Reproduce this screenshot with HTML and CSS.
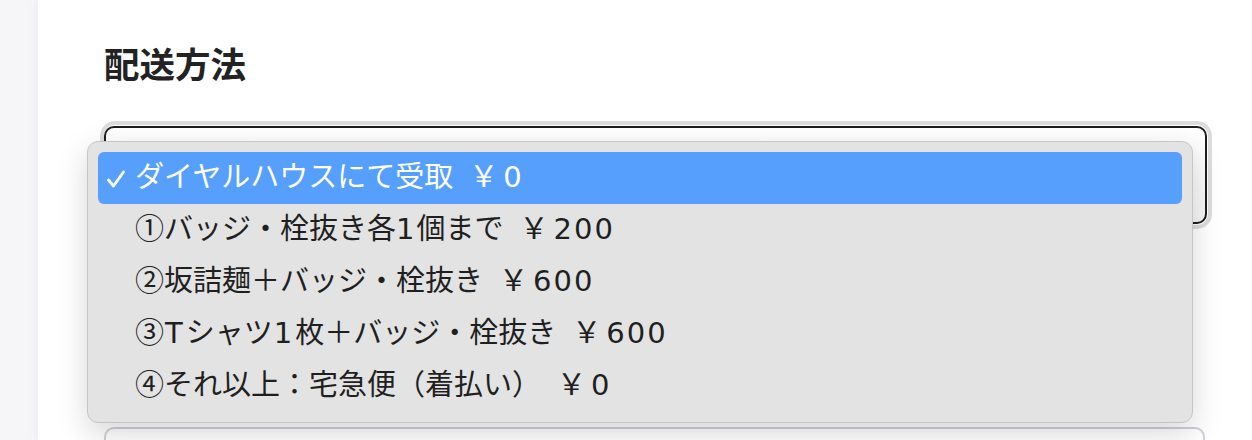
FILE: index.html
```html
<!DOCTYPE html>
<html lang="ja">
<head>
    <meta charset="UTF-8">
    <meta name="viewport" content="width=device-width, initial-scale=1.0">
    <title>配送方法</title>
    <link rel="stylesheet" href="styles.css">
</head>
<body>
    <div class="page">
        <div class="card">
            <h2 class="section-title">配送方法</h2>

            <!-- shipping select, opened -->
            <div class="select-wrap">
                <div class="select-box"></div>

                <ul class="select-menu">
                    <li class="option selected">
                        <svg class="check" width="18" height="18" viewBox="0 0 18 18"><path d="M1.5 10 L6.5 16 L16.5 2" fill="none" stroke="#fff" stroke-width="2.8" stroke-linecap="round" stroke-linejoin="round"/></svg>ダイヤルハウスにて受取<span class="price">￥<span class="num">0</span></span>
                    </li>
                    <li class="option">①バッジ・栓抜き各<span class="num">1</span>個まで<span class="price">￥<span class="num">200</span></span></li>
                    <li class="option">②坂詰麺＋バッジ・栓抜き<span class="price">￥<span class="num">600</span></span></li>
                    <li class="option">③<span class="num wide">T</span>シャツ<span class="num wide">1</span>枚＋バッジ・栓抜き<span class="price">￥<span class="num">600</span></span></li>
                    <li class="option">④それ以上：宅急便（着払い）<span class="price">￥<span class="num">0</span></span></li>
                </ul>
            </div>

            <div class="next-field"></div>
        </div>
    </div>
</body>
</html>
```

FILE: styles.css
```css
* {
    box-sizing: border-box;
}
body {
    margin: 0;
    padding: 0;
    height: 100vh;
    overflow: hidden;
    background: #f6f6f8;
    font-family: "Noto Sans CJK JP", sans-serif;
    color: #222;
}
.page {
    padding-left: 38px;
    height: 100%;
}
.card {
    background: #fff;
    height: 100%;
    overflow: hidden;
    padding: 40px 40px 0 62px;
    box-shadow: 0 0 14px rgba(0, 0, 0, 0.06);
}
.section-title {
    margin: 0 0 35px 4px;
    font-size: 35.5px;
    line-height: 46px;
    font-weight: bold;
    color: #222;
}
.select-wrap {
    position: relative;
    width: 1112px;
}
.select-box {
    height: 108px;
    border: 4px solid #dcdcdc;
    border-radius: 15px;
    position: relative;
}
.select-box::before {
    content: "";
    position: absolute;
    inset: 1px 1px 1px 0;
    border: 2px solid #1e1e1e;
    border-radius: 10px;
    background: linear-gradient(#fff, #f5f5f5);
}
.select-menu {
    position: absolute;
    top: 20px;
    left: -13px;
    width: 1106px;
    margin: 0;
    padding: 10px 10px;
    list-style: none;
    background: #e3e3e3;
    border: 1px solid #c6c6c6;
    border-radius: 11px;
    box-shadow: 0 10px 30px rgba(0, 0, 0, 0.16);
}
.option {
    height: 52px;
    line-height: 45px;
    padding-left: 37px;
    font-size: 29px;
    color: #1f1f1f;
    border-radius: 6px;
    white-space: nowrap;
}
.option.selected {
    background: #569ffd;
    color: #fff;
    padding-left: 9px;
}
.check {
    display: inline-block;
    margin-right: 10px;
    vertical-align: -1px;
}
.price {
    margin-left: 16px;
}
.num {
    font-family: "DejaVu Sans", sans-serif;
    line-height: 1;
    letter-spacing: 2px;
}
.price .num {
    margin-left: 5px;
}
.num.wide {
    padding: 0 1px 0 1px;
}
.next-field {
    margin-top: 198px;
    margin-left: 4px;
    width: 1101px;
    height: 40px;
    border: 2px solid #cfcfd6;
    border-radius: 10px;
}
```
